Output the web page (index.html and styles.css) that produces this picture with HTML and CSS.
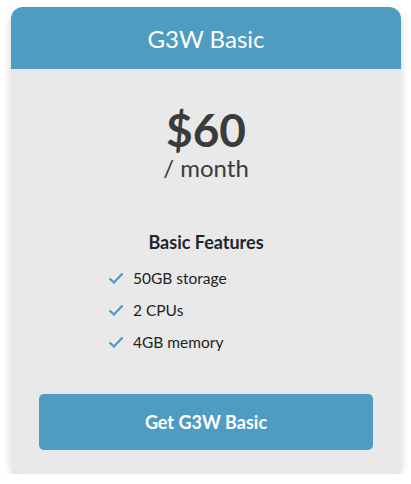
FILE: index.html
```html
<!DOCTYPE html>
<html lang="en">
    <head>
        <meta charset="UTF-8">
        <meta name="viewport" content="width=device-width, initial-scale=1.0">
        <title>G3W Basic</title>
        <link rel="stylesheet" href="styles.css">
    </head>
    <body>
        <div class="clCard">
            <div class="clTopo">
                <h2>G3W Basic</h2>
            </div>
            <div class="clPreco">
                <p class="clValor">$60</p>
                <p class="clPeriodo">/ month</p>
            </div>
            <div class="clRecursos">
                <h3>Basic Features</h3>
                <ul>
                    <li>
                        <svg width="16" height="12" viewBox="0 0 16 12"><path d="M1.5 6.5 L6 10.5 L14.5 1.5" fill="none" stroke="#4f9bc2" stroke-width="2.2"/></svg>
                        <span>50GB storage</span>
                    </li>
                    <li>
                        <svg width="16" height="12" viewBox="0 0 16 12"><path d="M1.5 6.5 L6 10.5 L14.5 1.5" fill="none" stroke="#4f9bc2" stroke-width="2.2"/></svg>
                        <span>2 CPUs</span>
                    </li>
                    <li>
                        <svg width="16" height="12" viewBox="0 0 16 12"><path d="M1.5 6.5 L6 10.5 L14.5 1.5" fill="none" stroke="#4f9bc2" stroke-width="2.2"/></svg>
                        <span>4GB memory</span>
                    </li>
                </ul>
            </div>
            <div class="clRodape">
                <button type="button" id="idAssinar">Get G3W Basic</button>
            </div>
        </div>
    </body>
</html>
```

FILE: styles.css
```css
*{
    margin: 0px;
    padding: 0px;
    box-sizing: border-box;
}
body{
    background: white;
    font-family: Lato, "Open Sans", sans-serif;
    padding: 7px 10px 0px 11px;
}
.clCard{
    width: 390px;
    background: #e9e9e9;
    border-radius: 12px;
    overflow: hidden;
    box-shadow: 0px 4px 8px rgba(0, 0, 0, 0.18);
}
.clTopo{
    background: #4f9bc2;
    height: 62px;
    display: flex;
    align-items: center;
    justify-content: center;
}
.clTopo h2{
    color: white;
    font-weight: 400;
    font-size: 24px;
}
.clPreco{
    text-align: center;
    color: #3b3b3b;
    padding-top: 35px;
}
.clValor{
    font-size: 46px;
    font-weight: 700;
    line-height: 52px;
}
.clPeriodo{
    font-size: 24px;
    line-height: 24px;
}
.clRecursos{
    padding-top: 50px;
    color: #222;
}
.clRecursos h3{
    text-align: center;
    font-size: 18px;
    font-weight: 700;
    line-height: 24px;
    color: #1f2530;
}
.clRecursos ul{
    list-style: none;
    padding-left: 97px;
    padding-top: 8px;
}
.clRecursos li{
    display: flex;
    align-items: center;
    gap: 9px;
    font-size: 15.5px;
    height: 32px;
    color: #222;
}
.clRodape{
    padding: 36px 28px 24px 28px;
}
.clRodape button{
    width: 100%;
    height: 56px;
    border: none;
    border-radius: 5px;
    background: #4f9bc2;
    color: white;
    font-family: Lato, sans-serif;
    font-weight: 700;
    font-size: 18px;
}
```
